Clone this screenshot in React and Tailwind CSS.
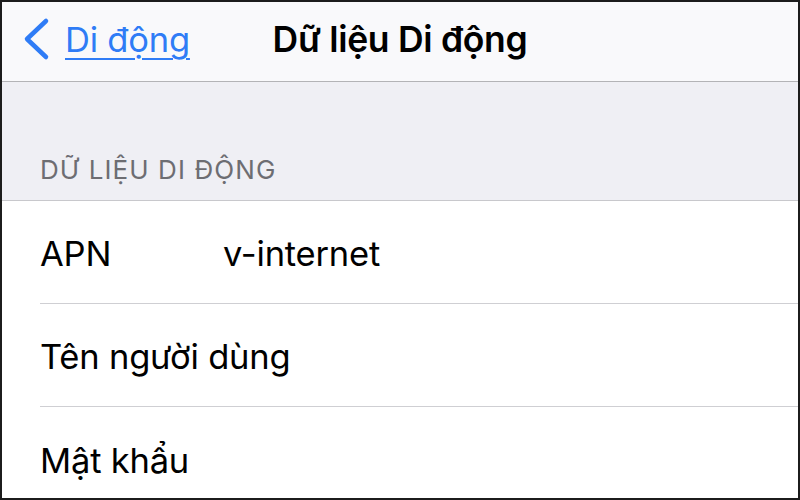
import React from "react";

const rows = [
  { label: "APN", value: "v-internet" },
  { label: "Tên người dùng", value: "" },
  { label: "Mật khẩu", value: "" },
];

export default function App() {
  return (
    <div
      className="w-[800px] h-[500px] overflow-hidden border-2 border-[#1c1c1c] bg-[#efeff4] flex flex-col"
      style={{ fontFamily: "Inter, 'Noto Sans', sans-serif" }}
    >
      {/* Nav bar */}
      <div className="h-[80px] shrink-0 bg-[#f9f9fb] border-b border-[#b3b3b6] grid grid-cols-[1fr_auto_1fr] items-center">
        <div className="flex items-center pl-[20px] gap-[13px] text-[#2f7cf6]">
          <svg width="30" height="44" viewBox="0 0 30 44" fill="none" className="-mt-[5px]">
            <polyline
              points="24,4 5,22 24,40"
              stroke="#2f7cf6"
              strokeWidth="4.5"
              strokeLinecap="round"
              strokeLinejoin="round"
            />
          </svg>
          <span className="text-[34.5px] leading-none underline decoration-2 underline-offset-[6px] tracking-[-0.2px] -mt-[2px]">
            Di động
          </span>
        </div>
        <h1 className="text-[35.5px] font-semibold text-black leading-none tracking-[-0.3px] -mt-[3px]">
          Dữ liệu Di động
        </h1>
        <div />
      </div>

      {/* Section header */}
      <div className="h-[119px] shrink-0 flex items-end pl-[38px] pb-[17px] border-b border-[#c8c8cc]">
        <span className="text-[26px] text-[#6d6d72] leading-none tracking-[1.1px]">
          DỮ LIỆU DI ĐỘNG
        </span>
      </div>

      {/* Rows */}
      <div className="bg-white flex-1">
        {rows.map((r, i) => (
          <div key={r.label} className="pl-[38px]">
            <div
              className={
                "h-[103px] flex items-center text-[34.5px] text-black tracking-[-0.2px] whitespace-nowrap pt-[4px] " +
                (i < rows.length - 1 ? "border-b border-[#cfcfd3]" : "")
              }
            >
              <span className={r.value ? "w-[183px] shrink-0" : ""}>{r.label}</span>
              {r.value && <span>{r.value}</span>}
            </div>
          </div>
        ))}
      </div>
    </div>
  );
}
